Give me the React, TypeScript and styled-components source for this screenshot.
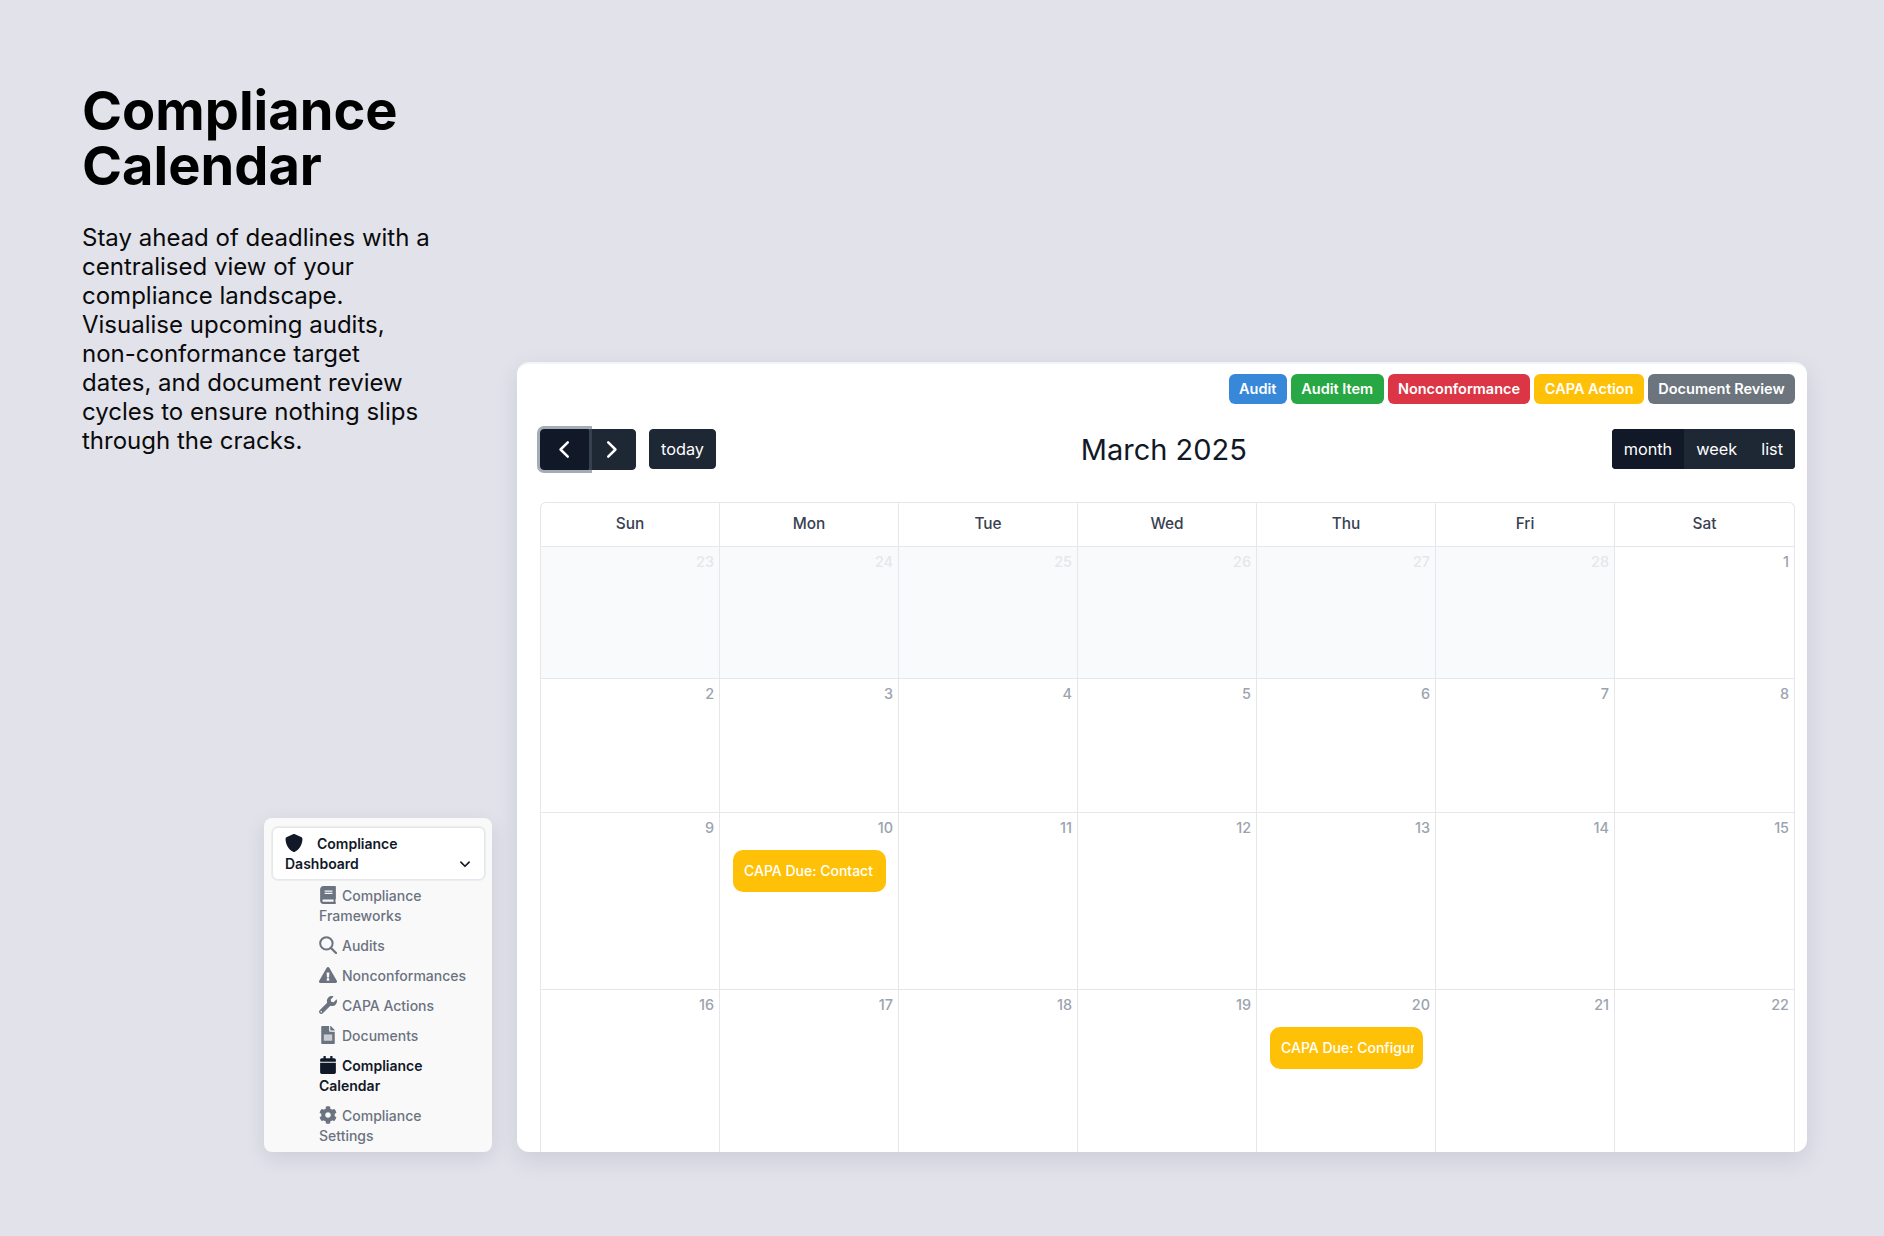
import styled, { createGlobalStyle } from "styled-components";
import {
  FaBook,
  FaCalendar,
  FaCog,
  FaExclamationTriangle,
  FaWrench,
} from "react-icons/fa";
import { FaShield } from "react-icons/fa6";
import type { ComponentType } from "react";

type NavItem = { label: string; icon: ComponentType; active?: boolean };
type CalEvent = { title: string };
type Day = { date: number; muted?: boolean; event?: CalEvent };
type Week = { height: number; days: Day[] };

const legend = [
  { label: "Audit", color: "#3788d8" },
  { label: "Audit Item", color: "#28a745" },
  { label: "Nonconformance", color: "#dc3545" },
  { label: "CAPA Action", color: "#ffc107" },
  { label: "Document Review", color: "#6c757d" },
];

// file glyph with the light label panel that the stock icons don't have
const DocumentIcon = () => (
  <svg viewBox="0 0 384 512" fill="currentColor">
    <path d="M224 136V0H24C10.7 0 0 10.7 0 24v464c0 13.3 10.7 24 24 24h336c13.3 0 24-10.7 24-24V160H248c-13.2 0-24-10.8-24-24zm160-14.1v6.1H256V0h6.1c6.4 0 12.5 2.5 17 7l97.9 98c4.5 4.5 7 10.6 7 16.9z" />
    <rect x="72" y="240" width="240" height="180" fill="#c9ccd2" />
  </svg>
);

const SearchIcon = () => (
  <svg viewBox="0 0 18 18" fill="none" stroke="currentColor">
    <circle cx="7.4" cy="7.4" r="6.2" strokeWidth="2" />
    <path d="M12 12l5 5" strokeWidth="2.3" strokeLinecap="round" />
  </svg>
);

const navItems: NavItem[] = [
  { label: "Compliance Frameworks", icon: FaBook },
  { label: "Audits", icon: SearchIcon },
  { label: "Nonconformances", icon: FaExclamationTriangle },
  { label: "CAPA Actions", icon: FaWrench },
  { label: "Documents", icon: DocumentIcon },
  { label: "Compliance Calendar", icon: FaCalendar, active: true },
  { label: "Compliance Settings", icon: FaCog },
];

const dayNames = ["Sun", "Mon", "Tue", "Wed", "Thu", "Fri", "Sat"];

const range = (from: number, to: number): Day[] =>
  Array.from({ length: to - from + 1 }, (_, i) => ({ date: from + i }));

const weeks: Week[] = [
  {
    height: 132,
    days: [
      ...range(23, 28).map((d) => ({ ...d, muted: true })),
      { date: 1 },
    ],
  },
  { height: 134, days: range(2, 8) },
  {
    height: 177,
    days: range(9, 15).map((d) =>
      d.date === 10 ? { ...d, event: { title: "CAPA Due: Contact" } } : d
    ),
  },
  {
    height: 200,
    days: range(16, 22).map((d) =>
      d.date === 20 ? { ...d, event: { title: "CAPA Due: Configure" } } : d
    ),
  },
];

const App = () => (
  <>
    <GlobalStyle />
    <Page>
      <LeftColumn>
        <Heading>
          Compliance
          <br />
          Calendar
        </Heading>
        <Intro>
          Stay ahead of deadlines with a centralised view of your compliance
          landscape. Visualise upcoming audits, non-conformance target dates,
          and document review cycles to ensure nothing slips through the cracks.
        </Intro>

        <Sidebar>
          <DashboardButton>
            <DashboardLabel>
              <FaShield />
              Compliance Dashboard
            </DashboardLabel>
            <svg width="12" height="12" viewBox="0 0 16 16" fill="none">
              <path
                d="M2.5 5.5 8 11l5.5-5.5"
                stroke="#111827"
                strokeWidth="2.2"
                strokeLinecap="round"
                strokeLinejoin="round"
              />
            </svg>
          </DashboardButton>
          <NavList>
            {navItems.map(({ label, icon: Icon, active }) => (
              <NavLink key={label} $active={active}>
                <Icon />
                {label}
              </NavLink>
            ))}
          </NavList>
        </Sidebar>
      </LeftColumn>

      <CalendarCard>
        <Legend>
          {legend.map((item) => (
            <LegendBadge key={item.label} $color={item.color}>
              {item.label}
            </LegendBadge>
          ))}
        </Legend>

        <Toolbar>
          <ToolbarGroup>
            <ButtonGroup>
              <PrevButton aria-label="prev">
                <svg width="21" height="21" viewBox="0 0 16 16" fill="none">
                  <path
                    d="M10.5 2.5 5 8l5.5 5.5"
                    stroke="#fff"
                    strokeWidth="1.9"
                    strokeLinecap="round"
                    strokeLinejoin="round"
                  />
                </svg>
              </PrevButton>
              <NextButton aria-label="next">
                <svg width="21" height="21" viewBox="0 0 16 16" fill="none">
                  <path
                    d="M5.5 2.5 11 8l-5.5 5.5"
                    stroke="#fff"
                    strokeWidth="1.9"
                    strokeLinecap="round"
                    strokeLinejoin="round"
                  />
                </svg>
              </NextButton>
            </ButtonGroup>
            <TodayButton>today</TodayButton>
          </ToolbarGroup>

          <MonthTitle>March 2025</MonthTitle>

          <ViewGroup>
            <ViewButton $active>month</ViewButton>
            <ViewButton>week</ViewButton>
            <ViewButton>list</ViewButton>
          </ViewGroup>
        </Toolbar>

        <Table>
          <HeaderRow>
            {dayNames.map((name) => (
              <HeaderCell key={name}>{name}</HeaderCell>
            ))}
          </HeaderRow>
          {weeks.map((week) => (
            <WeekRow key={week.days[0].date} $height={week.height}>
              {week.days.map((day) => (
                <DayCell key={day.date} $muted={day.muted}>
                  <DayNumber $muted={day.muted}>{day.date}</DayNumber>
                  {day.event && (
                    <EventChip>
                      <EventTitle>{day.event.title}</EventTitle>
                    </EventChip>
                  )}
                </DayCell>
              ))}
            </WeekRow>
          ))}
        </Table>
      </CalendarCard>
    </Page>
  </>
);

export default App;

const GlobalStyle = createGlobalStyle`
  * {
    box-sizing: border-box;
  }

  html,
  body {
    margin: 0;
    background: #e1e2ea;
    font-family: Inter, "Liberation Sans", sans-serif;
  }
`;

const Page = styled.div`
  display: flex;
  gap: 25px;
  width: 1884px;
  height: 1236px;
  padding: 83px 77px 84px 82px;
  overflow: hidden;
  background: #e1e2ea;
`;

const LeftColumn = styled.div`
  display: flex;
  flex-direction: column;
  flex: 0 0 410px;
`;

const Heading = styled.h1`
  margin: 0;
  font-size: 54.2px;
  line-height: 55px;
  font-weight: 700;
  color: #000;
`;

const Intro = styled.p`
  width: 352px;
  margin: 30px 0 0;
  font-size: 24px;
  line-height: 29px;
  font-weight: 400;
  color: #0a0a0a;
`;

const Sidebar = styled.aside`
  align-self: flex-end;
  width: 228px;
  height: 334px;
  margin-top: auto;
  padding: 9px 7px 0 8px;
  overflow: hidden;
  background: #f9f9fa;
  border-radius: 8px;
  box-shadow: 0 6px 20px rgba(15, 23, 42, 0.1);
`;

const DashboardButton = styled.div`
  display: flex;
  align-items: flex-end;
  justify-content: space-between;
  height: 53px;
  padding: 8px 13px 5px 12px;
  background: #fff;
  border: 1px solid #e6e7ec;
  border-radius: 6px;
  box-shadow: 0 0 0 1px #eceded;

  > svg {
    margin-bottom: 4px;
  }
`;

const DashboardLabel = styled.div`
  width: 150px;
  font-size: 14px;
  line-height: 20px;
  font-weight: 600;
  color: #111827;

  svg {
    width: 18px;
    height: 18px;
    margin-right: 14px;
    vertical-align: -3px;
  }
`;

const NavList = styled.nav`
  display: flex;
  flex-direction: column;
  gap: 10px;
  margin-top: 6px;
  padding: 0 14px 0 47px;
`;

const NavLink = styled.div<{ $active?: boolean }>`
  font-size: 14px;
  line-height: 20px;
  font-weight: ${({ $active }) => ($active ? 600 : 500)};
  color: ${({ $active }) => ($active ? "#111827" : "#6b7280")};

  svg {
    width: 18px;
    height: 18px;
    margin-right: 5px;
    vertical-align: -3px;
  }
`;

const CalendarCard = styled.main`
  flex: 1;
  height: 790px;
  margin-top: 279px;
  padding: 10px 12px 0 23px;
  overflow: hidden;
  background: #fff;
  border-top: 2px solid #f3f4f6;
  border-radius: 12px;
  box-shadow: 0 8px 24px rgba(15, 23, 42, 0.1);
`;

const Legend = styled.div`
  display: flex;
  justify-content: flex-end;
  gap: 4px;
`;

const LegendBadge = styled.span<{ $color: string }>`
  height: 30px;
  padding: 0 10.4px;
  font-size: 14.5px;
  line-height: 30px;
  font-weight: 600;
  color: #fff;
  background: ${({ $color }) => $color};
  border-radius: 6px;
`;

const Toolbar = styled.div`
  display: flex;
  align-items: flex-start;
  justify-content: space-between;
  height: 41px;
  margin-top: 25px;
`;

const ToolbarGroup = styled.div`
  display: flex;
  gap: 13px;
`;

const ButtonGroup = styled.div`
  display: flex;
`;

const BaseButton = styled.button`
  display: flex;
  align-items: center;
  justify-content: center;
  padding: 0;
  font-family: inherit;
  color: #fff;
  background: #1e2734;
  border: 1px solid #1e2734;
`;

const PrevButton = styled(BaseButton)`
  position: relative;
  z-index: 1;
  width: 49px;
  height: 41px;
  background: #111827;
  border-color: #111827;
  border-radius: 4px 0 0 4px;
  box-shadow: 0 0 0 3px rgba(76, 91, 106, 0.5);
`;

const NextButton = styled(BaseButton)`
  width: 47px;
  height: 41px;
  border-radius: 0 4px 4px 0;

  svg {
    margin-right: 2px;
  }
`;

const TodayButton = styled(BaseButton)`
  width: 67px;
  height: 40px;
  font-size: 16.3px;
  border-radius: 4px;
`;

const MonthTitle = styled.h2`
  margin: 0;
  font-size: 29px;
  line-height: 41px;
  font-weight: 400;
  color: #111827;
`;

const ViewGroup = styled.div`
  display: flex;
  overflow: hidden;
  border-radius: 4px;
`;

const ViewButton = styled(BaseButton)<{ $active?: boolean }>`
  height: 40px;
  padding: 0 11px;
  font-size: 16.3px;
  background: ${({ $active }) => ($active ? "#111827" : "#1e2734")};
  border-color: ${({ $active }) => ($active ? "#111827" : "#1e2734")};
  border-radius: 0;
`;

const Table = styled.div`
  margin-top: 32px;
  border: solid #e5e7eb;
  border-width: 1.5px 1.5px 0 1.5px;
  border-radius: 6px 6px 0 0;
`;

const HeaderRow = styled.div`
  display: grid;
  grid-template-columns: repeat(7, minmax(0, 1fr));
  height: 43px;
`;

const HeaderCell = styled.div`
  display: flex;
  align-items: center;
  justify-content: center;
  padding-bottom: 2px;
  font-size: 15.4px;
  font-weight: 500;
  color: #374151;
  border-right: 1.5px solid #e5e7eb;

  &:last-child {
    border-right: 0;
  }
`;

const WeekRow = styled.div<{ $height: number }>`
  display: grid;
  grid-template-columns: repeat(7, minmax(0, 1fr));
  height: ${({ $height }) => $height}px;
  border-top: 1.5px solid #e5e7eb;
`;

const DayCell = styled.div<{ $muted?: boolean }>`
  display: flex;
  flex-direction: column;
  min-width: 0;
  padding: 6px 5px 0 13px;
  background: ${({ $muted }) => ($muted ? "#f9fafb" : "#fff")};
  border-right: 1.5px solid #e5e7eb;

  &:last-child {
    border-right: 0;
  }
`;

const DayNumber = styled.div<{ $muted?: boolean }>`
  height: 18px;
  font-size: 14.4px;
  line-height: 18px;
  font-weight: 500;
  text-align: right;
  color: ${({ $muted }) => ($muted ? "#e5e7eb" : "#9ca3af")};
`;

const EventChip = styled.div`
  height: 42px;
  margin: 13px 7px 0 0;
  padding: 0 9px 0 11px;
  background: #ffc107;
  border-radius: 10px;
`;

const EventTitle = styled.div`
  overflow: hidden;
  font-size: 14px;
  line-height: 42px;
  font-weight: 500;
  white-space: nowrap;
  color: #fff;
`;
